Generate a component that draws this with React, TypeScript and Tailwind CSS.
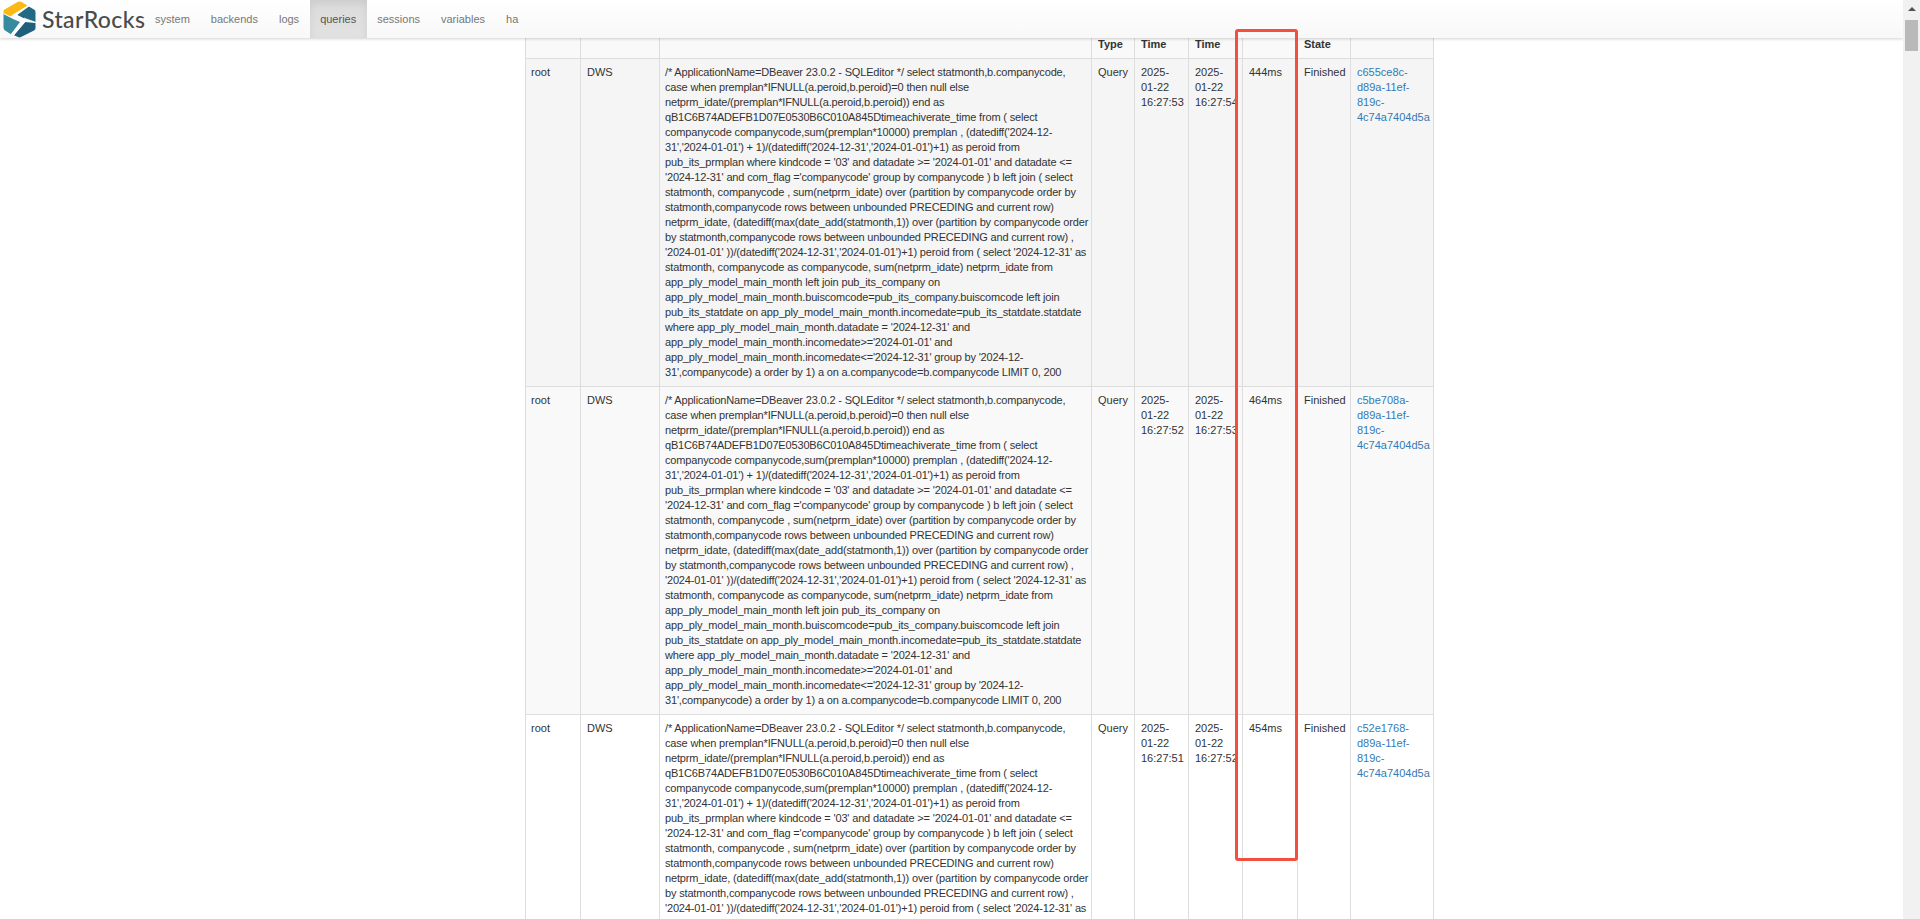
import React from "react";

const SQL = `/* ApplicationName=DBeaver 23.0.2 - SQLEditor */ select statmonth,b.companycode, case when premplan*IFNULL(a.peroid,b.peroid)=0 then null else netprm_idate/(premplan*IFNULL(a.peroid,b.peroid)) end as qB1C6B74ADEFB1D07E0530B6C010A845Dtimeachiverate_time from ( select companycode companycode,sum(premplan*10000) premplan , (datediff('2024-12-31','2024-01-01') + 1)/(datediff('2024-12-31','2024-01-01')+1) as peroid from pub_its_prmplan where kindcode = '03' and datadate >= '2024-01-01' and datadate <= '2024-12-31' and com_flag ='companycode' group by companycode ) b left join ( select statmonth, companycode , sum(netprm_idate) over (partition by companycode order by statmonth,companycode rows between unbounded PRECEDING and current row) netprm_idate, (datediff(max(date_add(statmonth,1)) over (partition by companycode order by statmonth,companycode rows between unbounded PRECEDING and current row) , '2024-01-01' ))/(datediff('2024-12-31','2024-01-01')+1) peroid from ( select '2024-12-31' as statmonth, companycode as companycode, sum(netprm_idate) netprm_idate from app_ply_model_main_month left join pub_its_company on app_ply_model_main_month.buiscomcode=pub_its_company.buiscomcode left join pub_its_statdate on app_ply_model_main_month.incomedate=pub_its_statdate.statdate where app_ply_model_main_month.datadate = '2024-12-31' and app_ply_model_main_month.incomedate>='2024-01-01' and app_ply_model_main_month.incomedate<='2024-12-31' group by '2024-12-31',companycode) a order by 1) a on a.companycode=b.companycode LIMIT 0, 200`;

const rows = [
  { start: "2025-01-22 16:27:53", end: "2025-01-22 16:27:54", dur: "444ms", id: "c655ce8c-d89a-11ef-819c-4c74a7404d5a", bg: "bg-[#f5f5f5]" },
  { start: "2025-01-22 16:27:52", end: "2025-01-22 16:27:53", dur: "464ms", id: "c5be708a-d89a-11ef-819c-4c74a7404d5a", bg: "bg-[#f9f9f9]" },
  { start: "2025-01-22 16:27:51", end: "2025-01-22 16:27:52", dur: "454ms", id: "c52e1768-d89a-11ef-819c-4c74a7404d5a", bg: "bg-white" },
];

const nav = ["system", "backends", "logs", "queries", "sessions", "variables", "ha"];
const td = "border border-[#dddddd] px-[6px] py-[6px] align-top";
const th = "border border-[#dddddd] px-[6px] pb-[6px] pt-0 text-left align-bottom font-bold";

function Logo() {
  return (
    <svg width="36" height="38" viewBox="0 0 36 38" className="shrink-0">
      <path d="M2.500 11Q2.500 10 4 9.200L17 1.800Q18.500 1 20 1.800L26.500 5.500L13 14.500L8.500 16.500L2.500 13.500z" fill="#fbb913" />
      <path d="M27 6L33 9.500Q34.500 10.300 34.500 12L34.500 22L22 18L16 15z" fill="#226a83" />
      <path d="M2.500 14L12 19L19 22L10 34.200L4 30.500Q2.500 29.500 2.500 27.500z" fill="#378b9f" />
      <path d="M34.500 23L34.500 28Q34.500 29.800 33 30.500L20 37Q18.500 37.800 17 37L13 35.200L24 22z" fill="#205f7c" />
      <path d="M27 5.500L11 15L21.500 20L10 34L12.700 35.500L26 20L16 15L28 6.500z" fill="#ffffff" />
      <path d="M23 18L34.500 22.300M3 13.700L9 16.500" stroke="#ffffff" strokeWidth="0.7" fill="none" />
    </svg>
  );
}

export default function App() {
  return (
    <div className="flex h-[919px] w-full overflow-hidden bg-white font-['Liberation_Sans',Arial,sans-serif] text-[11px] leading-[15px] text-[#333333]">
      <div className="min-w-0 flex-1 overflow-hidden">
        <header className="relative z-10 flex h-[38px] items-stretch bg-gradient-to-b from-white to-[#f8f8f8] shadow-[0_1px_3px_rgba(0,0,0,0.18)]">
          <div className="flex w-[144.500px] shrink-0 items-center gap-[5px] pl-[1px]">
            <Logo />
            <span className="font-['Lato',sans-serif] text-[23px] font-medium leading-none tracking-[0.4px] text-[#4a4a4a]">StarRocks</span>
          </div>
          {nav.map((n) => (
            <div
              key={n}
              className={
                n === "queries"
                  ? "flex items-center bg-gradient-to-b from-[#dbdbdb] to-[#e2e2e2] px-[10.500px] text-[#555555] shadow-[inset_0_3px_9px_rgba(0,0,0,0.075)]"
                  : "flex items-center px-[10.500px] text-[#777777]"
              }
            >
              {n}
            </div>
          ))}
        </header>
        <main className="-mt-[2px] ml-[525px] w-[909px]">
          <table className="w-[909px] table-fixed border-collapse">
            <colgroup>
              <col className="w-[55px]" />
              <col className="w-[79px]" />
              <col className="w-[432px]" />
              <col className="w-[43px]" />
              <col className="w-[54px]" />
              <col className="w-[54px]" />
              <col className="w-[55px]" />
              <col className="w-[53px]" />
              <col className="w-[83px]" />
            </colgroup>
            <thead>
              <tr className="bg-[#f9f9f9]">
                <th className={th}></th>
                <th className={th}></th>
                <th className={th}></th>
                <th className={th}>Type</th>
                <th className={th}>Time</th>
                <th className={th}>Time</th>
                <th className={th}></th>
                <th className={th}>State</th>
                <th className={th}></th>
              </tr>
            </thead>
            <tbody>
              {rows.map((r) => (
                <tr key={r.id} className={r.bg}>
                  <td className={td + " !pl-[5px]"}>root</td>
                  <td className={td}>DWS</td>
                  <td className={td + " !pl-[5px] !pr-[2px] tracking-[-0.165px]"}>{SQL}</td>
                  <td className={td}>Query</td>
                  <td className={td}>{r.start}</td>
                  <td className={td}>{r.end}</td>
                  <td className={td}>{r.dur}</td>
                  <td className={td}>Finished</td>
                  <td className={td}>
                    <a className="text-[#337ab7]" href="#">{r.id}</a>
                  </td>
                </tr>
              ))}
            </tbody>
          </table>
        </main>
      </div>
      <aside className="flex w-[17px] shrink-0 flex-col items-center bg-[#f1f1f1]">
        <div className="mt-[7px] h-0 w-0 border-x-[4px] border-b-[4px] border-x-transparent border-b-[#505050]" />
        <div className="mt-[9px] h-[31px] w-[13px] bg-[#b9b9b9]" />
      </aside>
      <div className="pointer-events-none absolute left-[1235px] top-[29px] z-20 h-[832px] w-[63px] rounded-[3px] border-[3px] border-[#f44e3f]" />
    </div>
  );
}
